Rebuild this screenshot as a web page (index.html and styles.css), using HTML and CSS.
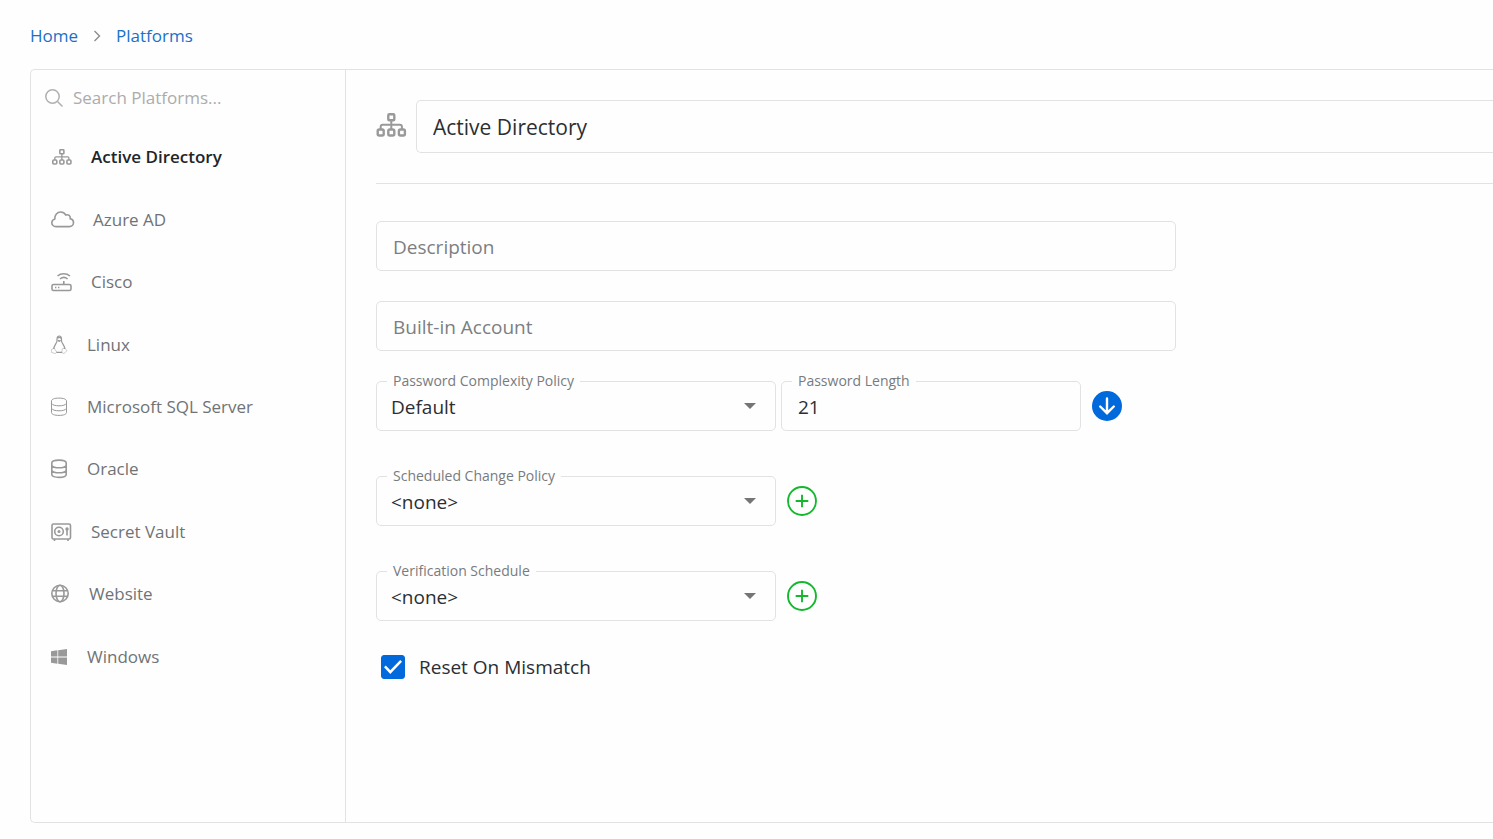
FILE: index.html
```html
<!DOCTYPE html>
<html lang="en">
<head>
    <meta charset="UTF-8">
    <meta name="viewport" content="width=device-width, initial-scale=1.0">
    <title>Platforms</title>
    <link rel="stylesheet" href="styles.css">
</head>
<body>
    <svg class="sprite" aria-hidden="true">
        <symbol id="icon-sitemap" viewBox="0 0 30 24">
            <g fill="none" stroke="currentColor" stroke-width="2.4">
                <rect x="11.8" y="1.2" width="6" height="6" rx="1"/>
                <rect x="1.2" y="16.5" width="6" height="6" rx="1.5"/>
                <rect x="11.8" y="16.5" width="6" height="6" rx="1.5"/>
                <rect x="22.4" y="16.5" width="6" height="6" rx="1.5"/>
                <path d="M14.8 7.2v9.3M4.2 16.5v-2.7a2 2 0 0 1 2-2h17.2a2 2 0 0 1 2 2v2.7" stroke-width="2"/>
            </g>
        </symbol>
    </svg>

    <nav class="breadcrumb" aria-label="Breadcrumb">
        <a href="#">Home</a>
        <svg class="chevron" width="8" height="12" viewBox="0 0 8 12"><path d="M1.5 1l5 5-5 5" fill="none" stroke="currentColor" stroke-width="1.4"/></svg>
        <a href="#">Platforms</a>
    </nav>

    <main class="panel">
        <aside class="sidebar">
            <label class="search">
                <svg width="19" height="19" viewBox="0 0 19 19" fill="none" stroke="currentColor" stroke-width="1.5"><circle cx="7.5" cy="7.5" r="6.7"/><path d="M12.5 12.5l5 5"/></svg>
                <input type="search" placeholder="Search Platforms..." aria-label="Search Platforms">
            </label>
            <ul class="platforms">
                <li><a class="active" href="#"><svg width="22" height="16"><use href="#icon-sitemap"/></svg>Active Directory</a></li>
                <li><a href="#"><svg width="24" height="17" viewBox="0 0 24 17" fill="none" stroke="currentColor" stroke-width="1.6"><path d="M5 15.6C2.6 15.600 .8 14 .8 11.700C.8 9.800 2 8.400 3.800 7.900C3.600 4 6.200 1 9.600 1c2.300 0 4.200 1.200 5.200 3 2.600-1 4.900.8 4.400 3.600 2 .5 3.300 2 3.300 3.900 0 2.400-1.800 4.100-4.100 4.100z"/></svg>Azure AD</a></li>
                <li><a href="#"><svg width="22" height="20" viewBox="0 0 22 20" fill="none" stroke="currentColor" stroke-width="1.6"><rect x="1" y="12.500" width="19" height="6" rx="1.500"/><path d="M12.800 12.500V9M6.500 4C10 1 15.500 1 19 4M9 7c2.300-2 5.300-2 7.600 0M4 15.500h1.400M7 15.500h1.400"/></svg>Cisco</a></li>
                <li><a href="#"><svg width="18" height="20" viewBox="0 0 18 20" fill="none" stroke="currentColor"><path d="M6 6V4c0-4 4.500-4 4.500 0v2c.4 2.500 3.300 4.700 3.300 8M6 6C5.500 8.500 3 10.500 2.700 14M5.500 17.300h5.500" stroke-width="1.200"/><path d="M6.500 3.200c1-1 2.500-1 3.500 0M6.800 5.300l1.400.8 1.500-.8" stroke-width="1.500"/><path d="M2.800 12.700l2.900 4.300c-.4 1.800-2 1.600-3.200 1l-2.200-.7c-.4-.8.300-1.700.2-2.800.7-.4 1.500-.3 2.300-1.800zM13.700 13.200c.7 1 1 1.400 2.100 2.200.3.800-1 1.400-1.900 2.300-1 1-2.900 1-3-.6l.3-3.300z" stroke-width=".5"/></svg>Linux</a></li>
                <li><a href="#"><svg width="18" height="20" viewBox="0 0 18 20" fill="none" stroke="currentColor"><path d="M.5 4c0-1.800 3-2.900 7.500-2.900S15.500 2.200 15.500 4v11.500c0 1.800-3 2.900-7.500 2.900S.5 17.300.5 15.500zM.5 6.300c1 1.800 3.700 2.500 7.500 2.500s6.500-.7 7.500-2.500M.5 11.300c1 1.800 3.700 2.500 7.500 2.500s6.500-.7 7.500-2.500"/></svg>Microsoft SQL Server</a></li>
                <li><a href="#"><svg width="18" height="20" viewBox="0 0 18 20" fill="none" stroke="currentColor" stroke-width="1.600"><path d="M.8 4c0-1.800 2.900-2.900 7.200-2.900S15.200 2.200 15.200 4v11.500c0 1.800-2.900 2.900-7.200 2.900S.8 17.300.8 15.500zM.8 6.300c1 1.800 3.500 2.500 7.200 2.500s6.200-.7 7.200-2.500M.8 11.300c1 1.800 3.500 2.500 7.200 2.500s6.200-.7 7.200-2.500"/></svg>Oracle</a></li>
                <li><a href="#"><svg width="22" height="18" viewBox="0 0 22 18" fill="none" stroke="currentColor" stroke-width="1.600"><rect x="1" y="1" width="18.500" height="15" rx="1.500"/><circle cx="8" cy="8.500" r="4.300"/><circle cx="8" cy="8.500" r="1.500" fill="currentColor" stroke="none"/><path d="M16 6v6.500M3.500 16v2M17 16v2"/><circle cx="16" cy="6" r="1.700" fill="currentColor" stroke="none"/></svg>Secret Vault</a></li>
                <li><a href="#"><svg width="20" height="20" viewBox="0 0 20 20" fill="none" stroke="currentColor" stroke-width="1.600"><circle cx="9" cy="9.500" r="8.200"/><ellipse cx="9" cy="9.500" rx="4" ry="8.200"/><path d="M1.500 6.700h15M1.500 12.300h15"/></svg>Website</a></li>
                <li><a href="#"><svg width="18" height="16" viewBox="0 0 18 16" fill="currentColor"><path d="M0 2.200l6.400-.9v6.300H0zM7.200 1.200L16 0v7.600H7.200zM0 8.400h6.400v6.300L0 13.800zM7.200 8.400H16V16l-8.800-1.200z"/></svg>Windows</a></li>
            </ul>
        </aside>

        <form class="details">
            <div class="title-row">
                <svg width="31" height="27"><use href="#icon-sitemap" height="24"/></svg>
                <input class="control title" type="text" value="Active Directory" aria-label="Platform name">
            </div>

            <div class="fields">
                <input class="control" type="text" placeholder="Description" aria-label="Description">
                <input class="control" type="text" placeholder="Built-in Account" aria-label="Built-in Account">

                <div class="row">
                    <div class="field">
                        <label for="complexity">Password Complexity Policy</label>
                        <select class="control" id="complexity"><option>Default</option></select>
                    </div>
                    <div class="field small">
                        <label for="length">Password Length</label>
                        <input class="control" type="text" id="length" value="21">
                    </div>
                    <button class="icon-button" type="button" aria-label="Apply">
                        <svg width="30" height="30" viewBox="0 0 30 30"><circle cx="15" cy="15" r="15" fill="#0069dc"/><path d="M15 7.500v14.500M8.200 15.500l6.800 6.700 6.800-6.700" fill="none" stroke="#fff" stroke-width="2.400" stroke-linecap="round"/></svg>
                    </button>
                </div>

                <div class="row">
                    <div class="field">
                        <label for="change">Scheduled Change Policy</label>
                        <select class="control" id="change"><option>&lt;none&gt;</option></select>
                    </div>
                    <button class="icon-button" type="button" aria-label="Add change policy">
                        <svg width="30" height="30" viewBox="0 0 30 30" fill="none" stroke="#14b82e" stroke-width="1.900"><circle cx="15" cy="15" r="14"/><path d="M15 8.700v12.600M8.700 15h12.600"/></svg>
                    </button>
                </div>

                <div class="row">
                    <div class="field">
                        <label for="verification">Verification Schedule</label>
                        <select class="control" id="verification"><option>&lt;none&gt;</option></select>
                    </div>
                    <button class="icon-button" type="button" aria-label="Add verification schedule">
                        <svg width="30" height="30" viewBox="0 0 30 30" fill="none" stroke="#14b82e" stroke-width="1.900"><circle cx="15" cy="15" r="14"/><path d="M15 8.700v12.600M8.700 15h12.600"/></svg>
                    </button>
                </div>

                <label class="check"><input type="checkbox" checked>Reset On Mismatch</label>
            </div>
        </form>
    </main>
</body>
</html>
```
FILE: styles.css
```css
* {
    box-sizing: border-box;
}

body {
    display: flex;
    flex-direction: column;
    min-height: 100vh;
    margin: 0;
    padding: 24px 0 16px 30px;
    background-color: #fefefe;
    color: #2b2f33;
    font-family: 'Open Sans', 'Noto Sans', sans-serif;
    font-size: 17px;
    line-height: 24px;
}

input, select, button {
    font: inherit;
    color: inherit;
}

a {
    text-decoration: none;
}

svg {
    flex: none;
}

.sprite {
    position: absolute;
    width: 0;
    height: 0;
}

.breadcrumb {
    display: flex;
    align-items: center;
    gap: 15px;
    margin-bottom: 21px;
}

.breadcrumb a {
    color: #1a70c8;
}

.chevron {
    color: #8c8c8c;
}

.panel {
    display: flex;
    flex: 1;
    border: 1px solid #e2e2e2;
    border-right: 0;
    border-radius: 5px 0 0 5px;
}

.sidebar {
    width: 315px;
    flex: none;
    border-right: 1px solid #e2e2e2;
}

.search {
    display: flex;
    align-items: center;
    gap: 9px;
    height: 56px;
    padding: 0 14px;
}

.search svg {
    color: #b0b0b0;
}

.search input {
    flex: 1;
    min-width: 0;
    padding: 0;
    border: 0;
    outline: 0;
    background: none;
    appearance: none;
}

.search input::placeholder {
    color: #acacac;
}

.platforms {
    display: grid;
    grid-auto-rows: 1fr;
    height: 562px;
    margin: 0;
    padding: 0;
    list-style: none;
}

.platforms a {
    display: flex;
    align-items: center;
    gap: 18px;
    height: 100%;
    padding-left: 20px;
    color: #707376;
}

.platforms svg,
.title-row svg {
    color: #999;
}

.platforms .active {
    color: #212529;
    font-weight: 600;
}

.details {
    flex: 1;
    min-width: 0;
    padding: 30px 0 30px 30px;
    font-size: 19px;
}

.control {
    width: 100%;
    height: 50px;
    padding: 1px 16px 0;
    border: 1px solid #e2e2e2;
    border-radius: 5px;
    outline: 0;
    background-color: transparent;
}

.control::placeholder {
    color: #7c7f82;
    opacity: 1;
}

.title-row {
    display: flex;
    align-items: center;
    gap: 9px;
    padding-bottom: 30px;
    border-bottom: 1px solid #e2e2e2;
}

.title {
    height: 53px;
    border-right: 0;
    border-radius: 5px 0 0 5px;
    font-size: 21px;
}

.fields {
    display: flex;
    flex-direction: column;
    gap: 30px;
    max-width: 800px;
    padding-top: 37px;
}

.row {
    display: flex;
    align-items: center;
    gap: 5px;
}

.row + .row {
    margin-top: 15px;
}

.field {
    position: relative;
    width: 400px;
}

.field.small {
    width: 300px;
}

.field label {
    position: absolute;
    top: -10px;
    left: 11px;
    padding: 0 6px;
    background-color: #fefefe;
    color: #787b7e;
    font-size: 14px;
    line-height: 20px;
}

.field select {
    padding: 1px 14px 0;
    appearance: none;
}

/* drop-down arrow */
.field:has(select)::after {
    content: "";
    position: absolute;
    top: 22px;
    right: 20px;
    border: 6px solid transparent;
    border-top-color: #757575;
    border-bottom: 0;
    pointer-events: none;
}

.icon-button {
    display: flex;
    margin-left: 6px;
    padding: 0;
    border: 0;
    background: none;
    cursor: pointer;
}

.check {
    display: flex;
    align-items: center;
    align-self: flex-start;
    gap: 14px;
    padding: 4px 5px;
}

.check input {
    display: grid;
    place-items: center;
    width: 24px;
    height: 24px;
    margin: 0;
    border-radius: 3px;
    background-color: #fff;
    border: 1px solid #0069dc;
    appearance: none;
}

.check input:checked {
    background-color: #0069dc;
}

.check input:checked::before {
    content: "";
    width: 18px;
    height: 14px;
    background-color: #fff;
    clip-path: polygon(0 52%, 10% 40%, 35% 74%, 90% 0, 100% 12%, 35% 100%);
}
```
